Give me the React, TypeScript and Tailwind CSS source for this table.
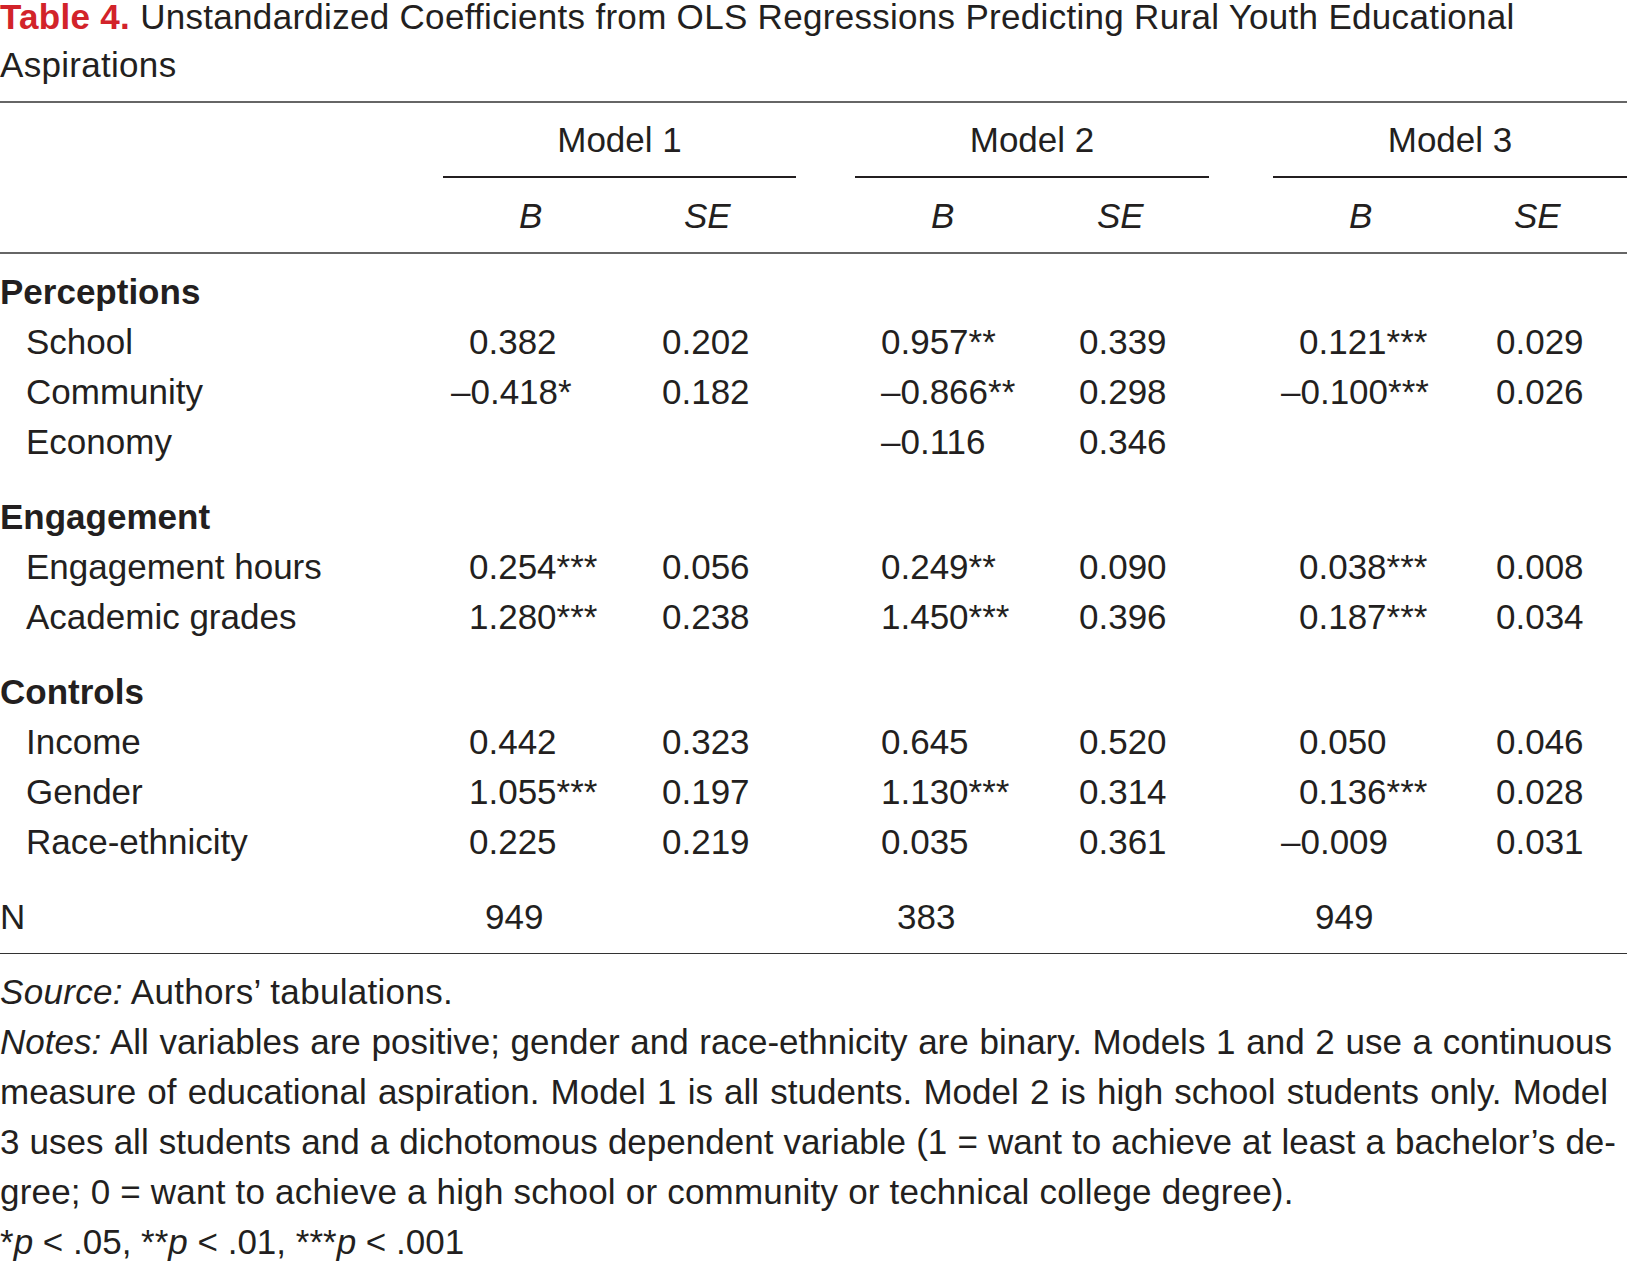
import React from 'react';

// Regression table: OLS coefficients predicting educational aspirations.

type Cell = string | null;

type Row = {
  label: string;
  values: [Cell, Cell, Cell, Cell, Cell, Cell];
};

type Section = {
  title: string;
  rows: Row[];
};

const SECTIONS: Section[] = [
  {
    title: 'Perceptions',
    rows: [
      { label: 'School', values: ['0.382', '0.202', '0.957**', '0.339', '0.121***', '0.029'] },
      { label: 'Community', values: ['–0.418*', '0.182', '–0.866**', '0.298', '–0.100***', '0.026'] },
      { label: 'Economy', values: [null, null, '–0.116', '0.346', null, null] },
    ],
  },
  {
    title: 'Engagement',
    rows: [
      { label: 'Engagement hours', values: ['0.254***', '0.056', '0.249**', '0.090', '0.038***', '0.008'] },
      { label: 'Academic grades', values: ['1.280***', '0.238', '1.450***', '0.396', '0.187***', '0.034'] },
    ],
  },
  {
    title: 'Controls',
    rows: [
      { label: 'Income', values: ['0.442', '0.323', '0.645', '0.520', '0.050', '0.046'] },
      { label: 'Gender', values: ['1.055***', '0.197', '1.130***', '0.314', '0.136***', '0.028'] },
      { label: 'Race-ethnicity', values: ['0.225', '0.219', '0.035', '0.361', '–0.009', '0.031'] },
    ],
  },
];

const GRID = 'grid grid-cols-[469px_193px_219px_198px_220px_197px_131px]';

// Models 1 and 3 hang the minus sign left of the column; Model 2 does not.
const HANGS = [true, false, false, false, true, false];

function ValueCell({ value, index }: { value: Cell; index: number }) {
  if (!value) return <div />;
  const hang = HANGS[index] && value.startsWith('–');
  return <div className={hang ? '-ml-[18px]' : ''}>{value}</div>;
}

function SectionBlock({ section, first }: { section: Section; first: boolean }) {
  return (
    <div className={first ? 'mt-[13px]' : 'mt-[25px]'}>
      <div className="font-bold">{section.title}</div>
      {section.rows.map((row) => (
        <div key={row.label} className={GRID}>
          <div className="pl-[26px]">{row.label}</div>
          {row.values.map((v, i) => (
            <ValueCell key={i} value={v} index={i} />
          ))}
        </div>
      ))}
    </div>
  );
}

function ModelHeader({ label, width }: { label: string; width: string }) {
  return (
    <div className={`flex flex-col ${width}`}>
      <div className="text-center">{label}</div>
      <div className="mt-[11px] h-[1.5px] bg-[#231f20]" />
    </div>
  );
}

export default function App() {
  return (
    <div
      className="min-h-screen w-[1627px] overflow-hidden bg-white text-[35px] leading-[50px] text-[#231f20]"
      style={{ fontFamily: '"Liberation Sans", Arial, sans-serif' }}
    >
      <div className="-mt-[7px] leading-[48px] tracking-[0.3px]">
        <span className="font-bold text-[#d2232a]">Table 4.</span> Unstandardized Coefficients from OLS
        Regressions Predicting Rural Youth Educational
        <br />
        Aspirations
      </div>

      <div className="mt-[12px] h-[2px] bg-[#666]" />

      {/* Column headers */}
      <div className="pt-[12px]">
        <div className="flex">
          <div className="w-[443px] shrink-0" />
          <ModelHeader label="Model 1" width="w-[353px]" />
          <div className="w-[59px] shrink-0" />
          <ModelHeader label="Model 2" width="w-[354px]" />
          <div className="w-[64px] shrink-0" />
          <ModelHeader label="Model 3" width="w-[354px]" />
        </div>
        <div className={`${GRID} mt-[13px] italic`}>
          <div />
          <div className="pl-[50px]">B</div>
          <div className="pl-[22px]">SE</div>
          <div className="pl-[50px]">B</div>
          <div className="pl-[18px]">SE</div>
          <div className="pl-[50px]">B</div>
          <div className="pl-[18px]">SE</div>
        </div>
      </div>

      <div className="mt-[11px] h-[2px] bg-[#666]" />

      {SECTIONS.map((s, i) => (
        <SectionBlock key={s.title} section={s} first={i === 0} />
      ))}

      <div className={`${GRID} mt-[25px]`}>
        <div>N</div>
        <div className="pl-[16px]">949</div>
        <div />
        <div className="pl-[16px]">383</div>
        <div />
        <div className="pl-[16px]">949</div>
        <div />
      </div>

      <div className="mt-[11px] h-[1.5px] bg-[#333]" />

      {/* Footnotes */}
      <div className="mt-[13px]">
        <div className="tracking-[0.3px]">
          <i>Source:</i> Authors’ tabulations.
        </div>
        <div className="w-[1612px] text-justify [text-align-last:justify]">
          <i>Notes:</i> All variables are positive; gender and race-ethnicity are binary. Models 1 and 2 use a
          continuous
        </div>
        <div className="w-[1608px] text-justify [text-align-last:justify]">
          measure of educational aspiration. Model 1 is all students. Model 2 is high school students only. Model
        </div>
        <div className="w-[1616px] text-justify [text-align-last:justify]">
          3 uses all students and a dichotomous dependent variable (1 = want to achieve at least a bachelor’s de-
        </div>
        <div className="tracking-[0.2px]">
          gree; 0 = want to achieve a high school or community or technical college degree).
        </div>
        <div>
          *<i>p</i> &lt; .05, **<i>p</i> &lt; .01, ***<i>p</i> &lt; .001
        </div>
      </div>
    </div>
  );
}
